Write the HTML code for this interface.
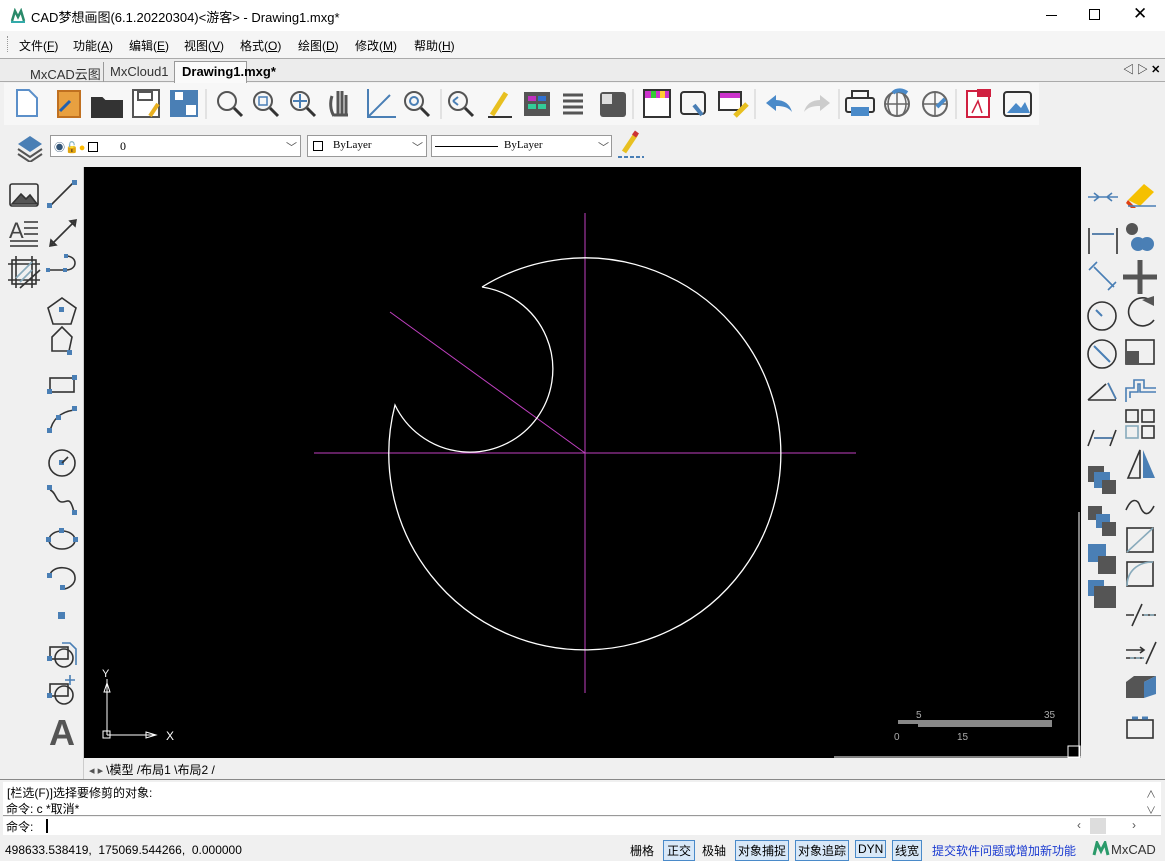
<!DOCTYPE html>
<html><head><meta charset="utf-8"><style>
*{margin:0;padding:0;box-sizing:border-box}
body{width:1165px;height:859px;overflow:hidden;background:#f0f0f0;font-family:"Liberation Sans","Noto Sans CJK SC",sans-serif;font-size:12px;color:#000;position:relative}
.a{position:absolute}
.t{white-space:nowrap}
</style></head><body>
<div class="a" style="left:0;top:0;width:1165px;height:31px;background:#fff"></div>
<svg class="a" style="left:10px;top:8px" width="16" height="16"><path d="M2 13 L5 3 L8 9 L11 3 L14 13" fill="none" stroke="#2a8a6a" stroke-width="2.5"/><rect x="1" y="13" width="14" height="2" fill="#3aa"/></svg>
<div class="a t" style="left:31px;top:7px;font-size:13px">CAD梦想画图(6.1.20220304)&lt;游客&gt; - Drawing1.mxg*</div>
<div class="a" style="left:1046px;top:15px;width:11px;height:1px;background:#000"></div>
<div class="a" style="left:1089px;top:9px;width:11px;height:11px;border:1px solid #000"></div>
<div class="a t" style="left:1133px;top:4px;font-size:17px">✕</div>
<div class="a" style="left:0;top:31px;width:1165px;height:27px;background:#f5f5f5"></div>
<div class="a" style="left:7px;top:36px;width:1px;height:16px;border-left:1px dotted #999"></div>
<div class="a t" style="left:19px;top:37px;font-size:12px">文件(<u>F</u>)</div>
<div class="a t" style="left:73px;top:37px">功能(<u>A</u>)</div>
<div class="a t" style="left:129px;top:37px">编辑(<u>E</u>)</div>
<div class="a t" style="left:184px;top:37px">视图(<u>V</u>)</div>
<div class="a t" style="left:240px;top:37px">格式(<u>O</u>)</div>
<div class="a t" style="left:298px;top:37px">绘图(<u>D</u>)</div>
<div class="a t" style="left:355px;top:37px">修改(<u>M</u>)</div>
<div class="a t" style="left:414px;top:37px">帮助(<u>H</u>)</div>
<div class="a" style="left:0;top:58px;width:1165px;height:24px;background:#ececec;border-top:1px solid #aaa;border-bottom:1px solid #aaa"></div>
<div class="a t" style="left:18px;top:62px;height:20px;padding:2px 0 0 12px;width:86px;border-right:1px solid #999;font-size:13px;color:#333">MxCAD云图</div>
<div class="a t" style="left:106px;top:62px;height:20px;padding:2px 0 0 4px;width:68px;font-size:13px;color:#333">MxCloud1</div>
<div class="a t" style="left:174px;top:61px;height:22px;padding:2px 0 0 7px;width:73px;background:#fafafa;border:1px solid #999;border-bottom:none;font-size:13px;font-weight:bold">Drawing1.mxg*</div>
<div class="a t" style="left:1123px;top:61px;font-size:11px">◁ ▷ <b>✕</b></div>
<div class="a" style="left:4px;top:83px;width:1035px;height:42px;background:#f7f7f7"></div>
<svg class="a" style="left:0;top:83px" width="1040" height="42">
<g stroke-width="2" fill="none">
<path d="M17 7 h12 l8 8 v18 h-20 z" stroke="#5b8fc9" fill="#fff"/>
<rect x="58" y="8" width="22" height="26" fill="#e8a040" stroke="#c07020"/><path d="M60 28 l10 -10" stroke="#2060b0" stroke-width="3"/>
<path d="M92 15 h10 l3 3 h17 v16 h-30 z" fill="#333" stroke="#333"/>
<rect x="133" y="7" width="26" height="27" stroke="#555" fill="#fff"/><rect x="138" y="9" width="14" height="8" stroke="#555"/><path d="M150 33 l8 -12" stroke="#e8b020" stroke-width="4"/>
<rect x="170" y="7" width="28" height="27" fill="#4a7fb5"/><rect x="175" y="9" width="8" height="8" fill="#fff"/><rect x="186" y="22" width="10" height="10" fill="#fff"/>
<line x1="206" y1="6" x2="206" y2="36" stroke="#ccc" stroke-width="1"/>
<circle cx="227" cy="18" r="9" stroke="#555"/><path d="M234 25 l8 8" stroke="#333" stroke-width="3"/>
<circle cx="263" cy="18" r="9" stroke="#555"/><rect x="259" y="14" width="8" height="8" stroke="#4a7fb5" stroke-width="1.5"/><path d="M270 25 l8 8" stroke="#333" stroke-width="3"/>
<circle cx="300" cy="18" r="9" stroke="#555"/><path d="M300 11 v14 M293 18 h14" stroke="#4a7fb5"/><path d="M307 25 l8 8" stroke="#333" stroke-width="3"/>
<path d="M334 33 c-4 -6 -4 -14 -2 -20 M338 32 v-24 M342 32 v-24 M346 32 v-20 M334 32 h14" stroke="#555" stroke-width="3"/>
<path d="M368 6 v28 h28 M368 34 l22 -22" stroke="#4a7fb5"/>
<circle cx="414" cy="18" r="9" stroke="#555"/><circle cx="414" cy="18" r="4" stroke="#4a7fb5"/><path d="M421 25 l8 8" stroke="#333" stroke-width="3"/>
<line x1="441" y1="6" x2="441" y2="36" stroke="#ccc" stroke-width="1"/>
<circle cx="458" cy="18" r="9" stroke="#555"/><path d="M453 18 l5 -4 M453 18 l5 4" stroke="#4a7fb5"/><path d="M465 25 l8 8" stroke="#333" stroke-width="3"/>
<path d="M492 32 l14 -22" stroke="#e8c020" stroke-width="5"/><path d="M488 34 h24" stroke="#333"/>
<rect x="524" y="9" width="26" height="24" fill="#555"/><rect x="528" y="13" width="8" height="5" fill="#c030c0"/><rect x="538" y="13" width="8" height="5" fill="#3070d0"/><rect x="528" y="21" width="8" height="5" fill="#3c9"/><rect x="538" y="21" width="8" height="5" fill="#3c9"/>
<path d="M563 12 h20 M563 18 h20 M563 24 h20 M563 30 h20" stroke="#555" stroke-width="3"/>
<rect x="600" y="9" width="26" height="25" rx="3" fill="#555"/><rect x="602" y="11" width="10" height="10" fill="#ddd"/>
<line x1="633" y1="6" x2="633" y2="36" stroke="#ccc" stroke-width="1"/>
<rect x="644" y="7" width="26" height="27" fill="#fff" stroke="#333"/><rect x="645" y="8" width="24" height="7" fill="#c3c"/><rect x="651" y="8" width="5" height="7" fill="#3c3"/><rect x="660" y="8" width="5" height="7" fill="#fc3"/>
<rect x="681" y="9" width="24" height="22" rx="3" stroke="#333"/><path d="M694 22 l8 10" stroke="#4a7fb5" stroke-width="4"/>
<rect x="719" y="9" width="22" height="18" fill="#fff" stroke="#333"/><rect x="720" y="10" width="20" height="5" fill="#c3c"/><path d="M735 33 l12 -12" stroke="#e8c020" stroke-width="5"/>
<line x1="755" y1="6" x2="755" y2="36" stroke="#ccc" stroke-width="1"/>
<path d="M766 20 l10 -8 v5 c8 0 14 4 16 12 c-4 -5 -9 -6 -16 -6 v5 z" fill="#4a8ac9" stroke="none"/>
<path d="M830 20 l-10 -8 v5 c-8 0 -14 4 -16 12 c4 -5 9 -6 16 -6 v5 z" fill="#ccc" stroke="none"/>
<line x1="839" y1="6" x2="839" y2="36" stroke="#ccc" stroke-width="1"/>
<rect x="846" y="15" width="28" height="14" rx="2" stroke="#333"/><rect x="852" y="8" width="16" height="7" stroke="#333"/><rect x="851" y="24" width="18" height="9" fill="#4a8ac9" stroke="none"/>
<circle cx="897" cy="21" r="12" stroke="#666"/><path d="M885 21 h24 M897 9 v24 M891 11 c-4 6 -4 14 0 20 M903 11 c4 6 4 14 0 20" stroke="#666" stroke-width="1.5"/><path d="M893 10 c4 -4 10 -3 14 0" stroke="#4a8ac9" stroke-width="4"/>
<circle cx="935" cy="21" r="12" stroke="#666"/><path d="M923 21 h24 M935 9 v24" stroke="#666" stroke-width="1.5"/><path d="M937 24 l8 -8" stroke="#4a8ac9" stroke-width="4"/>
<line x1="956" y1="6" x2="956" y2="36" stroke="#ccc" stroke-width="1"/>
<rect x="967" y="8" width="22" height="26" fill="#fff" stroke="#d02040"/><rect x="977" y="6" width="14" height="8" fill="#d02040" stroke="none"/><path d="M972 30 l6 -12 l4 12" stroke="#d02040" stroke-width="1.5"/>
<rect x="1004" y="9" width="27" height="24" rx="3" stroke="#333"/><path d="M1007 30 l9 -10 l5 5 l4 -6 l5 11 z" fill="#4a8ac9" stroke="none"/>
</g></svg>
<svg class="a" style="left:14px;top:130px" width="32" height="32"><path d="M4 14 l12 -8 l12 8 l-12 8 z" fill="#4a7fb5"/><path d="M4 19 l12 8 l12 -8 M4 24 l12 8 l12 -8" fill="none" stroke="#555" stroke-width="2"/></svg>
<div class="a" style="left:50px;top:135px;width:251px;height:22px;background:#fff;border:1px solid #999"></div>
<div class="a t" style="left:54px;top:139px;font-size:11px"><span style="color:#357">◉</span><span style="color:#c90">🔓</span><span style="color:#fb0">●</span> <span style="display:inline-block;width:10px;height:10px;border:1px solid #000;vertical-align:-1px"></span></div>
<div class="a t" style="left:120px;top:139px;font-family:'Liberation Serif',serif;font-size:12px">0</div>
<div class="a" style="left:286px;top:139px;font-size:11px;color:#555">﹀</div>
<div class="a" style="left:307px;top:135px;width:120px;height:22px;background:#fff;border:1px solid #999"></div>
<div class="a" style="left:313px;top:141px;width:10px;height:10px;border:1px solid #000"></div>
<div class="a t" style="left:333px;top:139px;font-family:'Liberation Serif',serif;font-size:11px">ByLayer</div>
<div class="a" style="left:412px;top:139px;font-size:11px;color:#555">﹀</div>
<div class="a" style="left:431px;top:135px;width:181px;height:22px;background:#fff;border:1px solid #999"></div>
<div class="a" style="left:435px;top:146px;width:63px;height:1px;background:#000"></div>
<div class="a t" style="left:504px;top:139px;font-family:'Liberation Serif',serif;font-size:11px">ByLayer</div>
<div class="a" style="left:598px;top:139px;font-size:11px;color:#555">﹀</div>
<svg class="a" style="left:616px;top:130px" width="32" height="30"><path d="M8 22 l12 -18" stroke="#e8c020" stroke-width="5"/><path d="M18 6 l3 -4" stroke="#c33" stroke-width="5"/><path d="M2 27 h26" stroke="#4a7fb5" stroke-width="2" stroke-dasharray="4 2"/></svg>
<div class="a" style="left:0;top:167px;width:84px;height:612px;background:#f0f0f0;border-right:1px solid #ccc"></div>
<svg class="a" style="left:0;top:170px" width="84" height="580"><g fill="none" stroke="#333" stroke-width="1.6">
<rect x="10" y="14" width="28" height="22" rx="2"/><path d="M12 34 l9 -10 l5 5 l4 -4 l7 9z" fill="#555"/>
<path d="M50 36 l24 -24" /><rect x="47" y="33" width="5" height="5" fill="#4a7fb5" stroke="none"/><rect x="72" y="10" width="5" height="5" fill="#4a7fb5" stroke="none"/>
<text x="9" y="68" font-size="22" fill="#444" stroke="none" font-family="Liberation Sans">A</text><path d="M24 52 h14 M24 58 h14 M24 64 h14 M10 71 h28 M10 76 h28"/>
<path d="M50 76 l26 -26 M50 76 l6 -1 l-5 -5 z M76 50 l-6 1 l5 5z" fill="#555"/>
<rect x="12" y="90" width="24" height="24"/><path d="M8 94 h32 M8 110 h32 M16 86 v32 M32 86 v32 M20 118 l20 -18" /><path d="M16 108 l16 -16 M20 112 l12 -12" stroke="#8ab"/>
<path d="M48 100 h18 M66 86 c12 0 12 14 0 14" stroke="#333"/><rect x="46" y="98" width="4" height="4" fill="#4a7fb5" stroke="none"/><rect x="63" y="98" width="4" height="4" fill="#4a7fb5" stroke="none"/><rect x="64" y="84" width="4" height="4" fill="#4a7fb5" stroke="none"/>
<path d="M62 128 l14 10 l-5 16 h-18 l-5 -16z"/><rect x="59" y="137" width="5" height="5" fill="#4a7fb5" stroke="none"/>
<path d="M52 181 v-14 l10 -10 l10 10 l-3 14z"/><rect x="67" y="180" width="5" height="5" fill="#4a7fb5" stroke="none"/>
<rect x="50" y="208" width="24" height="14"/><rect x="72" y="205" width="5" height="5" fill="#4a7fb5" stroke="none"/><rect x="47" y="219" width="5" height="5" fill="#4a7fb5" stroke="none"/>
<path d="M50 262 c2 -12 10 -20 24 -22"/><rect x="47" y="258" width="5" height="5" fill="#4a7fb5" stroke="none"/><rect x="56" y="245" width="5" height="5" fill="#4a7fb5" stroke="none"/><rect x="72" y="236" width="5" height="5" fill="#4a7fb5" stroke="none"/>
<circle cx="62" cy="293" r="13"/><rect x="59" y="290" width="5" height="5" fill="#4a7fb5" stroke="none"/><path d="M62 293 l6 -6"/>
<path d="M50 320 c6 2 6 12 12 12 c6 0 8 -6 12 10"/><rect x="47" y="315" width="5" height="5" fill="#4a7fb5" stroke="none"/><rect x="72" y="340" width="5" height="5" fill="#4a7fb5" stroke="none"/>
<ellipse cx="62" cy="370" rx="13" ry="9"/><rect x="46" y="367" width="5" height="5" fill="#4a7fb5" stroke="none"/><rect x="73" y="367" width="5" height="5" fill="#4a7fb5" stroke="none"/><rect x="59" y="358" width="5" height="5" fill="#4a7fb5" stroke="none"/>
<path d="M50 405 c2 -10 24 -10 25 2 c1 8 -8 12 -12 12"/><rect x="47" y="403" width="5" height="5" fill="#4a7fb5" stroke="none"/><rect x="60" y="415" width="5" height="5" fill="#4a7fb5" stroke="none"/>
<rect x="58" y="442" width="7" height="7" fill="#4a7fb5" stroke="none"/>
<rect x="50" y="477" width="18" height="12"/><circle cx="64" cy="488" r="9"/><rect x="47" y="486" width="5" height="5" fill="#4a7fb5" stroke="none"/><path d="M62 473 h8 l6 6 v16" stroke="#4a7fb5"/>
<rect x="50" y="514" width="18" height="12"/><circle cx="64" cy="525" r="9"/><rect x="47" y="523" width="5" height="5" fill="#4a7fb5" stroke="none"/><path d="M70 505 v10 M65 510 h10" stroke="#4a7fb5"/>
<text x="49" y="575" font-size="36" font-weight="bold" fill="#555" stroke="none" font-family="Liberation Sans">A</text>
</g></svg>
<div class="a" style="left:84px;top:167px;width:997px;height:591px;background:#000"></div>
<svg class="a" style="left:84px;top:167px" width="997" height="591">
<g stroke="#c040c0" stroke-width="1"><line x1="230" y1="286" x2="772" y2="286"/><line x1="501" y1="46" x2="501" y2="526"/><line x1="306" y1="145" x2="501" y2="286"/></g>
<path d="M398 120 A196 196 0 1 1 311 238 A83 83 0 1 0 398 120" fill="none" stroke="#fff" stroke-width="1.3"/>
<g stroke="#fff" fill="none" stroke-width="1"><line x1="23" y1="568" x2="23" y2="512"/><line x1="23" y1="568" x2="72" y2="568"/><rect x="19" y="564" width="7" height="7"/><path d="M20 525 l3 -9 l3 9z M62 565 l10 3 l-10 3z"/></g>
<text x="18" y="510" fill="#fff" font-size="11" font-family="Liberation Sans">Y</text><text x="82" y="573" fill="#fff" font-size="12" font-family="Liberation Sans">X</text>
<rect x="814" y="553" width="154" height="4" fill="#888"/><rect x="834" y="557" width="134" height="3" fill="#888"/>
<text x="832" y="551" fill="#aaa" font-size="10" font-family="Liberation Sans">5</text><text x="960" y="551" fill="#aaa" font-size="10" font-family="Liberation Sans">35</text>
<text x="810" y="573" fill="#aaa" font-size="10" font-family="Liberation Sans">0</text><text x="873" y="573" fill="#aaa" font-size="10" font-family="Liberation Sans">15</text>
<line x1="995" y1="345" x2="995" y2="591" stroke="#fff"/><line x1="750" y1="590" x2="997" y2="590" stroke="#fff"/><rect x="984" y="579" width="12" height="12" fill="none" stroke="#fff"/>
</svg>
<div class="a" style="left:84px;top:758px;width:997px;height:20px;background:#f0f0f0"></div>
<div class="a t" style="left:89px;top:761px;font-size:11px;color:#555">◂ ▸ <span style="color:#000;font-size:12px">\模型 /布局1 \布局2 /</span></div>
<div class="a" style="left:1084px;top:167px;width:81px;height:612px;background:#f0f0f0"></div>
<svg class="a" style="left:1080px;top:170px" width="85" height="580"><g fill="none" stroke="#333" stroke-width="1.6">
<path d="M8 27 h30 M14 23 l5 4 l-5 4 M32 23 l-5 4 l5 4" stroke="#4a7fb5"/>
<path d="M48 30 l16 -16 l10 8 l-14 14z" fill="#f5c000" stroke="none"/><path d="M48 30 l8 8 l-5 0 l-5 -5z" fill="#e04010" stroke="none"/><path d="M48 36 h28" stroke="#4a7fb5"/>
<path d="M9 58 v26 M37 58 v26 M12 64 h22" /><path d="M12 64 h22" stroke="#4a7fb5"/>
<circle cx="52" cy="59" r="6" fill="#555" stroke="none"/><circle cx="58" cy="74" r="7" fill="#4a7fb5" stroke="none"/><circle cx="67" cy="74" r="7" fill="#4a7fb5" stroke="none"/>
<path d="M9 100 l8 -8 M28 120 l8 -8 M14 97 l20 20" stroke="#4a7fb5"/>
<path d="M60 90 v34 M43 107 h34" stroke="#555" stroke-width="5"/>
<circle cx="22" cy="146" r="14"/><path d="M22 146 l-6 -6" stroke="#4a7fb5" stroke-width="2"/>
<path d="M70 130 a14 14 0 1 0 4 20"/><path d="M62 130 l12 -4 v10z" fill="#555" stroke="none"/>
<circle cx="22" cy="184" r="14"/><path d="M14 176 l16 16" stroke="#4a7fb5" stroke-width="2"/>
<rect x="46" y="170" width="28" height="24"/><rect x="46" y="181" width="13" height="13" fill="#555" stroke="none"/>
<path d="M8 230 l18 -16 M8 230 h28 M28 213 l8 16" /><path d="M28 213 l8 16" stroke="#4a7fb5"/>
<path d="M46 232 v-14 h8 v-8 h10 v8 h12 M50 228 v-6 h8 v-8 h2 v8 h16" stroke="#4a7fb5"/>
<path d="M8 276 l6 -16 M30 276 l6 -16 M14 268 h18" /><path d="M14 268 h18" stroke="#4a7fb5"/>
<rect x="46" y="240" width="12" height="12"/><rect x="62" y="240" width="12" height="12"/><rect x="46" y="256" width="12" height="12" stroke="#8ab"/><rect x="62" y="256" width="12" height="12"/>
<rect x="8" y="296" width="16" height="16" fill="#555" stroke="none"/><rect x="14" y="302" width="16" height="16" fill="#4a7fb5" stroke="none"/><rect x="22" y="310" width="14" height="14" fill="#555" stroke="none"/>
<path d="M60 280 l-12 28 h12z"/><path d="M63 280 l12 28 h-12z" fill="#4a7fb5" stroke="none"/>
<rect x="8" y="336" width="14" height="14" fill="#555" stroke="none"/><rect x="16" y="344" width="14" height="14" fill="#4a7fb5" stroke="none"/><rect x="22" y="352" width="14" height="14" fill="#555" stroke="none"/>
<path d="M46 340 c6 -14 12 -10 14 -4 c3 8 8 12 14 0"/>
<rect x="8" y="374" width="18" height="18" fill="#4a7fb5" stroke="none"/><rect x="18" y="386" width="18" height="18" fill="#555" stroke="none"/>
<rect x="47" y="358" width="26" height="24"/><path d="M47 382 l26 -24" stroke="#8ab"/>
<rect x="8" y="410" width="16" height="16" fill="#4a7fb5" stroke="none"/><rect x="14" y="416" width="22" height="22" fill="#555" stroke="none"/>
<rect x="47" y="392" width="26" height="24"/><path d="M47 416 c0 -14 10 -24 26 -24" stroke="#8ab"/>
<path d="M46 445 h8 M52 456 l10 -22 M62 445 h14" /><path d="M64 445 h12" stroke="#8ab" stroke-dasharray="4 2"/>
<path d="M46 480 h18 M60 477 l4 3 l-4 3 M46 488 h18 M66 494 l10 -22" /><path d="M50 488 h14" stroke="#8ab" stroke-dasharray="4 2"/>
<path d="M46 512 h18 v16 h-18z" fill="#555" stroke="none"/><path d="M46 512 l8 -6 h22 l-12 6z" fill="#555" stroke="none"/><path d="M64 512 l12 -6 v18 l-12 4z" fill="#4a7fb5" stroke="none"/>
<rect x="47" y="550" width="26" height="18"/><path d="M52 548 h6 M62 548 h6" stroke="#4a7fb5" stroke-width="3"/>
</g></svg>
<div class="a" style="left:0;top:779px;width:1165px;height:1px;background:#888"></div>
<div class="a" style="left:3px;top:782px;width:1158px;height:34px;background:#fff;border-bottom:1px solid #999"></div>
<div class="a t" style="left:7px;top:784px;font-size:12px"> [栏选(F)]选择要修剪的对象:</div>
<div class="a t" style="left:6px;top:800px;font-size:12px">命令: c *取消*</div>
<div class="a t" style="left:1146px;top:786px;font-size:10px;color:#555">∧</div>
<div class="a t" style="left:1146px;top:802px;font-size:10px;color:#555">∨</div>
<div class="a" style="left:3px;top:817px;width:1158px;height:18px;background:#fff"></div>
<div class="a t" style="left:6px;top:818px;font-size:12px">命令:</div>
<div class="a" style="left:46px;top:819px;width:2px;height:14px;background:#000"></div>
<div class="a" style="left:1090px;top:818px;width:16px;height:16px;background:#ddd"></div>
<div class="a t" style="left:1077px;top:818px;font-size:12px;color:#555">‹</div>
<div class="a t" style="left:1132px;top:818px;font-size:12px;color:#555">›</div>
<div class="a t" style="left:5px;top:843px;font-size:12px">498633.538419,&nbsp; 175069.544266,&nbsp; 0.000000</div>
<div class="a t" style="left:630px;top:842px;font-size:12px">栅格</div>
<div class="a t" style="left:663px;top:840px;font-size:12px;border:1px solid #4a8ac9;background:#d8e8f8;padding:1px 3px">正交</div>
<div class="a t" style="left:702px;top:842px;font-size:12px">极轴</div>
<div class="a t" style="left:735px;top:840px;font-size:12px;border:1px solid #4a8ac9;background:#d8e8f8;padding:1px 2px">对象捕捉</div>
<div class="a t" style="left:795px;top:840px;font-size:12px;border:1px solid #4a8ac9;background:#d8e8f8;padding:1px 2px">对象追踪</div>
<div class="a t" style="left:855px;top:840px;font-size:12px;border:1px solid #4a8ac9;background:#d8e8f8;padding:1px 2px">DYN</div>
<div class="a t" style="left:892px;top:840px;font-size:12px;border:1px solid #4a8ac9;background:#d8e8f8;padding:1px 2px">线宽</div>
<div class="a t" style="left:932px;top:842px;font-size:12px;color:#1a3ad0">提交软件问题或增加新功能</div>
<svg class="a" style="left:1092px;top:841px" width="18" height="16"><path d="M2 14 L5 2 L9 10 L13 2 L16 14" fill="none" stroke="#2a9a6a" stroke-width="3"/></svg>
<div class="a t" style="left:1111px;top:842px;font-size:13px;color:#333">MxCAD</div>
</body></html>
